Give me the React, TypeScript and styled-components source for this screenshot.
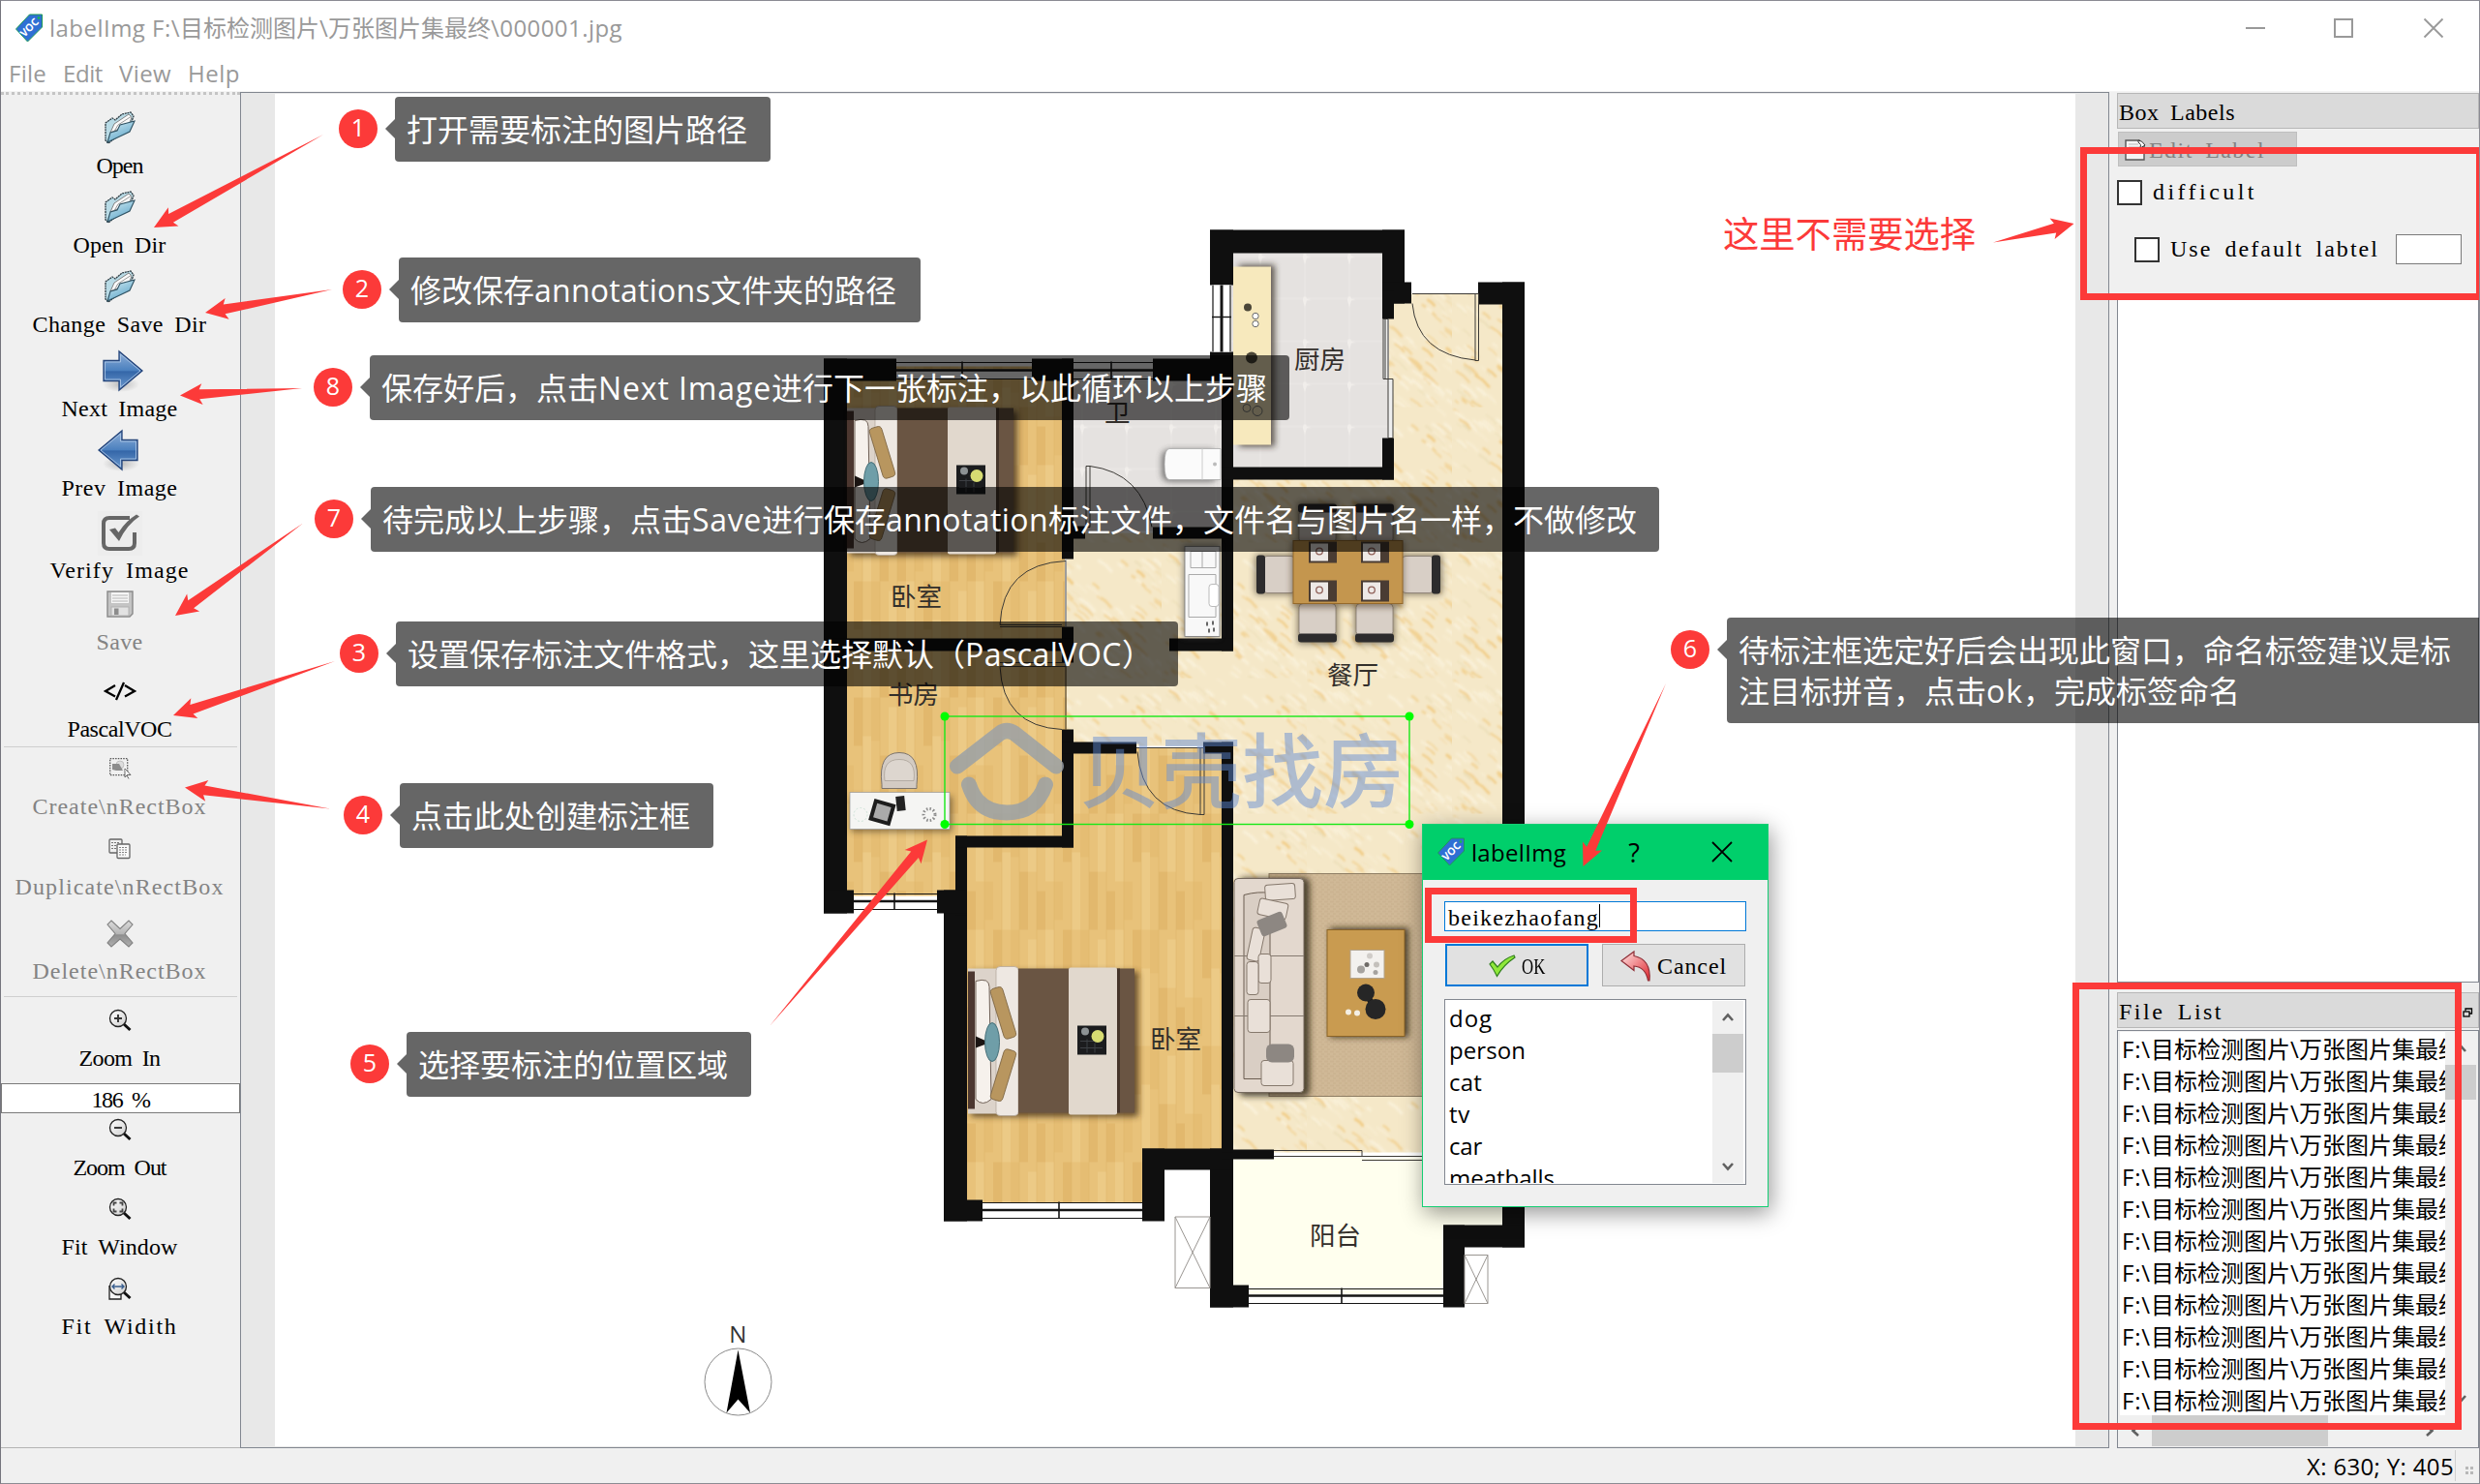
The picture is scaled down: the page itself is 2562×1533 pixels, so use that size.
import React, { useLayoutEffect, useRef, useState } from 'react';
import styled, { createGlobalStyle, css } from 'styled-components';

const RED = '#fc3a39';
const SANS = '"Open Sans", "Noto Sans CJK SC", sans-serif';
const SERIF = '"Liberation Serif", "Noto Sans CJK SC", serif';

const GlobalStyle = createGlobalStyle`
  * { box-sizing: border-box; }
  body { margin: 0; background: #f0f0f0; font-family: ${SANS}; overflow: hidden; }
  svg { display: block; flex: none; overflow: visible; }
`;

/* ---------- text that is tracked to an exact run length ---------- */

const Run = styled.span<{ $serif?: boolean }>`
  display: inline-block;
  white-space: pre;
  ${p => p.$serif && css`font-family: ${SERIF}; font-size: 24px; word-spacing: 5px;`}
`;

function Fit({ w, serif, children }: { w: number; serif?: boolean; children: string }) {
  const ref = useRef<HTMLSpanElement>(null);
  const [spacing, setSpacing] = useState(0);
  useLayoutEffect(() => {
    const el = ref.current;
    if (el) setSpacing((w - el.getBoundingClientRect().width) / children.length);
  }, []);
  return <Run ref={ref} $serif={serif} style={{ letterSpacing: spacing }}>{children}</Run>;
}

const Mono = ({ children }: { children: string }) => <Fit serif w={children.length * 12}>{children}</Fit>;

/* ---------- window frame ---------- */

const Window = styled.div`
  position: relative;
  width: 2562px;
  height: 1533px;
  display: flex;
  flex-direction: column;
  background: #f0f0f0;
  border: 1px solid #8b8b93;
  border-left-color: #75757d;
  overflow: hidden;
`;

const TitleBar = styled.header`
  height: 55px;
  flex: none;
  display: flex;
  align-items: center;
  background: #fff;
  color: #999;
  font-size: 24px;
  padding-left: 14px;
  gap: 6px;
`;

const TitleText = styled.div`
  flex: 1;
  white-space: pre;
  line-height: 34px;
  padding-top: 1px;
`;

const WindowButtons = styled.div`
  display: flex;
  gap: 71px;
  padding-right: 36px;
`;

const MenuBar = styled.nav`
  height: 39px;
  flex: none;
  display: flex;
  gap: 17px;
  padding: 0 0 0 8px;
  background: #fff;
  color: #999;
  font-size: 24px;
  line-height: 39px;
  border-bottom: 1px solid #f4f4f4;
`;

const Body = styled.div`
  flex: 1;
  min-height: 0;
  display: flex;
`;

const StatusBar = styled.footer`
  height: 36px;
  flex: none;
  display: flex;
  justify-content: flex-end;
  align-items: center;
  font-size: 24px;
  line-height: 34px;
  color: #000;
`;

const StatusCell = styled.div`
  height: 32px;
  line-height: 34px;
  padding-right: 1px;
  border-right: 1px solid #d0d0d0;
`;

const Grip = styled.div`
  display: grid;
  grid-template-columns: 3px 3px;
  gap: 2px;
  margin: 10px 6px 0 10px;
  i { width: 3px; height: 3px; background: #b8b8b8; }
`;

/* ---------- tool bar ---------- */

const ToolColumn = styled.aside`
  width: 247px;
  flex: none;
  display: flex;
  flex-direction: column;
  background: #f0f0f0;
  border-top: 3px dotted #c4c4c4;
  border-bottom: 1px solid #b4b4b4;
  padding-top: 5px;
`;

const ToolItem = styled.div<{ $gap: number; $off?: boolean }>`
  margin-top: ${p => p.$gap}px;
  display: flex;
  flex-direction: column;
  align-items: center;
  gap: 9px;
  padding-right: 2px;
  color: ${p => (p.$off ? '#838383' : '#000')};
`;

const IconSlot = styled.div`
  height: 32px;
  display: flex;
  align-items: center;
  justify-content: center;
`;

const ToolLabel = styled.div`
  height: 28px;
  line-height: 28px;
  white-space: pre;
`;

const Rule = styled.div<{ $gap: number }>`
  height: 1px;
  margin: ${p => p.$gap}px 3px 0;
  background: #cfcfcf;
`;

const ZoomField = styled.div`
  height: 31px;
  margin-top: 12px;
  border: 1px solid #7a7a7a;
  background: #fff;
  text-align: center;
  line-height: 32px;
`;

/* ---------- canvas ---------- */

const CanvasFrame = styled.main`
  flex: 1;
  display: flex;
  justify-content: center;
  border: 1px solid #828790;
  background: #e8e8e8;
  padding: 1px 0;
`;

const Sheet = styled.div`
  width: 1860px;
  background: #fff;
`;

/* ---------- right docks ---------- */

const Docks = styled.aside`
  width: 382px;
  flex: none;
  display: flex;
  flex-direction: column;
  padding-left: 8px;
  background: #f0f0f0;
`;

const DockTitle = styled.div<{ $gap?: number }>`
  height: 37px;
  flex: none;
  margin-top: ${p => p.$gap ?? 1}px;
  display: flex;
  align-items: center;
  justify-content: space-between;
  padding: 4px 6px 0 1px;
  background: #dadada;
  border: 1px solid #b7b7b7;
`;

const EditButton = styled.div`
  width: 185px;
  height: 36px;
  margin: 3px 0 0 1px;
  display: flex;
  align-items: center;
  gap: 3px;
  padding: 2px 0 0 6px;
  background: #ccc;
  border: 1px solid #bfbfbf;
  color: #838383;
`;

const CheckRow = styled.div<{ $top: number; $left?: number }>`
  height: 31px;
  margin-top: ${p => p.$top}px;
  padding-left: ${p => p.$left ?? 0}px;
  display: flex;
  align-items: center;
  gap: 11px;
`;

const Box = styled.span`
  width: 26px;
  height: 26px;
  border: 2px solid #333;
  background: #fff;
`;

const SmallField = styled.span`
  width: 68px;
  height: 31px;
  margin-left: 6px;
  border: 1px solid #7a7a7a;
  background: #fff;
`;

const LabelList = styled.div`
  height: 711px;
  margin-top: 31px;
  flex: none;
  background: #fff;
  border: 1px solid #828790;
`;

const FileBox = styled.div`
  flex: 1;
  min-height: 0;
  margin-top: 2px;
  display: grid;
  grid-template-columns: 1fr 32px;
  grid-template-rows: 1fr 32px;
  padding: 1px 2px;
  background: #f0f0f0;
  border: 1px solid #828790;
`;

const FileRows = styled.div`
  overflow: hidden;
  background: #fff;
  padding: 0 0 0 2px;
`;

const FileRow = styled.div`
  height: 33px;
  line-height: 35px;
  font-size: 24px;
  white-space: nowrap;
`;

const VScroll = styled.div`
  display: flex;
  flex-direction: column;
  align-items: center;
  justify-content: space-between;
  background: #f0f0f0;
`;

const VThumb = styled.div<{ $h: number }>`
  width: 32px;
  height: ${p => p.$h}px;
  background: #cdcdcd;
`;

const ArrowCell = styled.div`
  width: 32px;
  height: 34px;
  display: flex;
  align-items: center;
  justify-content: center;
`;

const Spacer = styled.div`
  flex: 1;
`;

const HScroll = styled.div`
  display: flex;
  align-items: center;
  background: #f0f0f0;
`;

const HThumb = styled.div`
  width: 182px;
  height: 32px;
  margin-left: 1px;
  background: #cdcdcd;
`;

/* ---------- annotations laid over the window ---------- */

const Note = styled.div<{ $x: number; $y: number; $w: number }>`
  position: absolute;
  left: ${p => p.$x - 1}px;
  top: ${p => p.$y - 1}px;
  width: ${p => p.$w}px;
  padding: 13px 0 12px 12px;
  background: rgba(0, 0, 0, 0.6);
  border-radius: 4px;
  color: #fff;
  font-size: 32px;
  line-height: 42px;
  white-space: nowrap;
  &::before {
    content: '';
    position: absolute;
    left: -10px;
    top: 23px;
    border: 10px solid transparent;
    border-left: 0;
    border-right-color: rgba(0, 0, 0, 0.6);
  }
`;

const Badge = styled.div<{ $x: number; $y: number }>`
  position: absolute;
  left: ${p => p.$x - 21}px;
  top: ${p => p.$y - 21}px;
  width: 40px;
  height: 40px;
  border-radius: 50%;
  background: ${RED};
  color: #fff;
  font-size: 25px;
  line-height: 37px;
  text-align: center;
`;

const RedText = styled.div`
  position: absolute;
  left: 1779px;
  top: 216px;
  color: ${RED};
  font-size: 37.300px;
  line-height: 50px;
  white-space: nowrap;
`;

const RedFrame = styled.div<{ $x: number; $y: number; $w: number; $h: number }>`
  position: absolute;
  left: ${p => p.$x - 1}px;
  top: ${p => p.$y - 1}px;
  width: ${p => p.$w}px;
  height: ${p => p.$h}px;
  border: 7px solid ${RED};
`;

const ArrowLayer = styled.svg`
  position: absolute;
  left: -1px;
  top: -1px;
`;

/* ---------- label dialog ---------- */

const Dialog = styled.section`
  position: absolute;
  left: 1468px;
  top: 850px;
  width: 358px;
  height: 396px;
  display: flex;
  flex-direction: column;
  background: #f0f0f0;
  border: 1px solid #14cf74;
  box-shadow: 2px 6px 22px rgba(0, 0, 0, 0.42);
`;

const DialogTitle = styled.div`
  height: 57px;
  flex: none;
  display: flex;
  align-items: center;
  padding: 0 36px 1px 14px;
  gap: 6px;
  background: #00cf6b;
  font-size: 24px;
  color: #000;
`;

const HelpMark = styled.span`
  margin: 0 68px 0 auto;
  font-size: 27px;
`;

const DialogBody = styled.div`
  flex: 1;
  display: flex;
  flex-direction: column;
  padding: 22px 22px;
`;

const NameField = styled.div`
  height: 31px;
  display: flex;
  align-items: center;
  padding: 4px 0 0 3px;
  background: #fff;
  border: 1px solid #0078d7;
`;

const Caret = styled.i`
  width: 1px;
  height: 24px;
  margin-top: -5px;
  background: #000;
`;

const ButtonRow = styled.div`
  display: flex;
  gap: 14px;
  padding: 0 1px;
  margin: 13px 0;
`;

const DialogButton = styled.div<{ $primary?: boolean }>`
  width: 148px;
  height: 44px;
  display: flex;
  align-items: center;
  justify-content: center;
  gap: 6px;
  padding-top: 2px;
  background: #e1e1e1;
  border: ${p => (p.$primary ? '2px solid #0078d7' : '1px solid #adadad')};
`;

const NarrowLabel = styled.span`
  font-family: ${SERIF};
  font-size: 24px;
  width: 24px;
  transform: scaleX(0.7);
  transform-origin: left;
`;

const NameList = styled.div`
  height: 192px;
  display: flex;
  padding: 1px 2px 1px 1px;
  background: #fff;
  border: 1px solid #828790;
`;

const Names = styled.div`
  flex: 1;
  overflow: hidden;
  padding-left: 3px;
  font-size: 24px;
`;

const NameRow = styled.div`
  height: 33px;
  line-height: 35px;
`;

/* ---------- small drawings ---------- */

const TagIcon = () => (
  <svg width="30" height="30" viewBox="0 0 29 30">
    <path d="M15 1H28V14L13 29 1 16Z" fill="#2f6fd4" stroke="#1d9a55" strokeWidth="1" />
    <circle cx="24.5" cy="4.5" r="1.4" fill="#19b35a" />
    <text x="15" y="18" fontSize="10.5" fontWeight="700" fill="#fff" textAnchor="middle" transform="rotate(-45 15 14.5)" fontFamily={SANS}>VOC</text>
  </svg>
);

const FolderIcon = () => (
  <svg width="34" height="34" viewBox="0 0 34 34">
    <defs>
      <linearGradient id="folder" x1="0" y1="0" x2="0.6" y2="1">
        <stop offset="0" stopColor="#d8eff6" /><stop offset="1" stopColor="#5fa6c9" />
      </linearGradient>
    </defs>
    <path d="M2 12L9 7 12 9 19 3 28 1 31 5 27 16 5 33 2 30Z" fill="#b9dbe6" stroke="#2d3b42" strokeWidth="1.3" strokeDasharray="2 .7" />
    <path d="M7 22L11 13 26 3 29 6 26 14Z" fill="#fafafa" stroke="#777" strokeWidth=".9" />
    <path d="M9 24L15 14 29 5" stroke="#999" fill="none" />
    <path d="M4 32L7 22 14 20 17 14 32 10 27 21Z" fill="url(#folder)" stroke="#2f5263" strokeWidth="1.1" />
  </svg>
);

const BigArrow = ({ back }: { back?: boolean }) => (
  <svg width="44" height="44" viewBox="0 0 44 44">
    <defs>
      <linearGradient id="blue" x1="0" y1="0" x2="0" y2="1">
        <stop offset="0" stopColor="#8fb0d8" /><stop offset=".5" stopColor="#4a7fbe" /><stop offset=".52" stopColor="#3466a8" /><stop offset="1" stopColor="#6d9bd0" />
      </linearGradient>
      <radialGradient id="shade"><stop offset="0" stopColor="#999" stopOpacity=".6" /><stop offset="1" stopColor="#999" stopOpacity="0" /></radialGradient>
    </defs>
    <ellipse cx="23" cy="36" rx="19" ry="8" fill="url(#shade)" />
    <g transform={back ? 'translate(42 0) scale(-1 1)' : 'translate(3 0)'}>
      <path d="M2 11.5H18V2L42 22 18 42V32.500H2Z" fill="url(#blue)" stroke="#24447a" strokeWidth="1.3" />
      <path d="M3.500 13H19.500V5L40 22 19.500 39V31H3.500Z" fill="none" stroke="#a9c4e4" strokeWidth=".9" />
    </g>
  </svg>
);

const VerifyIcon = () => (
  <svg width="46" height="44" viewBox="0 0 46 44">
    <rect width="46" height="46" fill="#ededed" />
    <path d="M33 7H12Q6 7 6 13V33Q6 39 12 39H32Q38 39 38 33V22" fill="none" stroke="#666" strokeWidth="4" />
    <path d="M12 19L22 31Q30 14 43 5.500L40 3.500Q29 10 21.500 22L18 17.500Z" fill="#666" />
  </svg>
);

const SaveIcon = () => (
  <svg width="28" height="28" viewBox="0 0 28 28">
    <path d="M1 1H27V24L24 27H1Z" fill="#c4c4c4" stroke="#8a8a8a" strokeWidth="1.4" />
    <rect x="5" y="2" width="18" height="11" fill="#f6f6f6" />
    <path d="M6 5H22M6 8H22M6 11H22" stroke="#b5b5b5" />
    <rect x="5" y="17" width="18" height="9" fill="#e2e2e2" stroke="#aaa" strokeWidth=".8" />
    <rect x="8" y="18.500" width="4.500" height="6.500" fill="#8c8c8c" />
  </svg>
);

const CodeIcon = () => (
  <svg width="34" height="20" viewBox="0 0 34 20" fill="none" stroke="#000" strokeWidth="2.300">
    <path d="M12 4L2 10 12 15.500M22 4L32 10 22 15.500M21 1L13 19" />
  </svg>
);

const CreateIcon = () => (
  <svg width="22" height="22" viewBox="0 0 22 22">
    <rect x=".7" y=".7" width="18" height="17" fill="none" stroke="#555" strokeWidth="1.3" strokeDasharray="1.500 1.200" />
    <circle cx="11" cy="7" r="4" fill="#ddd" stroke="#aaa" strokeWidth=".6" />
    <path d="M3 6H10L14 13H7L3 12Z" fill="#8c8c8c" />
    <path d="M16 11V20L18 18 20 21.500" fill="#fff" stroke="#666" /><path d="M16 11L22 17.500H18" fill="#fff" stroke="#666" />
  </svg>
);

const DuplicateIcon = () => (
  <svg width="23" height="22" viewBox="0 0 23 22" stroke="#666" strokeWidth="1.300">
    <rect x="1" y="1" width="13" height="14" rx="1" fill="#efefef" />
    <path d="M3 4.500H12M3 7.500H8M3 10.500H8" strokeDasharray="2 1" strokeWidth=".9" />
    <rect x="9" y="6" width="13" height="14.500" rx="1" fill="#fafafa" />
    <path d="M11 9.500H20M11 12H20M11 14.500H20M11 17H18" strokeDasharray="2 1" strokeWidth=".8" />
  </svg>
);

const DeleteIcon = () => (
  <svg width="28" height="29" viewBox="0 0 28 29">
    <defs><linearGradient id="del" x1="0" y1="0" x2="0" y2="1"><stop offset="0" stopColor="#ddd" /><stop offset=".5" stopColor="#b5b5b5" /><stop offset=".55" stopColor="#8e8e8e" /><stop offset="1" stopColor="#b0b0b0" /></linearGradient></defs>
    <path d="M5 1L14 9.500 23 1 27 5 19 14.500 27 24 23 28 14 20 5 28 1 24 9 14.500 1 5Z" fill="url(#del)" stroke="#828282" strokeWidth="1.100" />
  </svg>
);

const Lens = ({ kind }: { kind: 'in' | 'out' | 'window' | 'width' }) => (
  <svg width="24" height="24" viewBox="0 0 24 24" fill="none">
    <defs><linearGradient id="lens" x1="0" y1="0" x2="1" y2="1"><stop offset="0" stopColor="#fff" /><stop offset="1" stopColor="#cfcfcf" /></linearGradient></defs>
    {kind === 'width' && <path d="M1 9V23H13V16" stroke="#222" strokeWidth="1.300" fill="#f6f6f6" />}
    <path d="M16 16L22.500 22" stroke="#111" strokeWidth="3" />
    <circle cx="10" cy="10" r="8.500" fill="url(#lens)" stroke="#222" strokeWidth="1.300" />
    {kind === 'in' && <path d="M6 10H14M10 6V14" stroke="#333" strokeWidth="1.900" />}
    {kind === 'out' && <path d="M6 10H14" stroke="#333" strokeWidth="1.900" />}
    {kind === 'window' && <path d="M5.500 8.500V5.500H8.500M11.500 5.500H14.500V8.500M14.500 11.500V14.500H11.500M8.500 14.500H5.500V11.500" stroke="#444" strokeWidth="1.800" />}
    {kind === 'width' && <path d="M4 10H16M6.500 7.500L4 10 6.500 12.500M13.500 7.500L16 10 13.500 12.500" stroke="#3a5f8f" strokeWidth="1.400" />}
  </svg>
);

const PageIcon = () => (
  <svg width="22" height="22" viewBox="0 0 22 22">
    <path d="M1 1H15L20 6V21H1Z" fill="#f4f4f4" stroke="#555" strokeWidth="1.400" />
    <path d="M4 5H14M4 8H16M4 11H13" stroke="#bbb" />
    <path d="M14 1Q18 1 21 6L16 9Q18 5 14 3Z" fill="#fff" stroke="#333" />
  </svg>
);

const CheckIcon = () => (
  <svg width="28" height="24" viewBox="0 0 28 24">
    <path d="M1 10L4 7 9 13Q16 4 26 1L27 3Q15 11 8.500 22.500Q5 15 1 10Z" fill="#8fe83a" stroke="#2f7d1c" strokeWidth="1.200" />
  </svg>
);

const UndoIcon = () => (
  <svg width="32" height="34" viewBox="0 0 32 34">
    <defs><linearGradient id="undo" x1="0" y1="0" x2="1" y2="1"><stop offset="0" stopColor="#ffe6e6" /><stop offset="1" stopColor="#e0262d" /></linearGradient></defs>
    <path d="M1 11.500L14 2V6.500Q32 10 30 32H28.500Q26 18 14 17V21.500Z" fill="url(#undo)" stroke="#8f3038" strokeWidth="1.200" />
  </svg>
);

const Chevron = ({ turn }: { turn: number }) => (
  <svg width="12" height="10" viewBox="-6 -5 12 10">
    <path d="M-5 3L0 -2.500 5 3" fill="none" stroke="#606060" strokeWidth="2.600" transform={`rotate(${turn})`} />
  </svg>
);

/* ---------- floor plan ---------- */

const Bed = ({ dx, dy }: { dx: number; dy: number }) => (
  <g transform={`translate(${dx} ${dy})`}>
    <rect x="878" y="424" width="173" height="150" rx="3" fill="#3d2c18" opacity=".75" filter="url(#soft)" />
    <rect x="875" y="421" width="52" height="150" fill="#dcd3ca" />
    <rect x="875" y="424" width="7" height="142" fill="#4c3730" />
    <path d="M883 434Q897 430 897 440L899 556Q890 564 883 556Z" fill="#f6f1ec" stroke="#6f6056" />
    <rect x="904" y="419" width="23" height="154" rx="4" fill="#eee8e2" stroke="#b0a498" strokeWidth=".7" />
    <rect x="905" y="440" width="13" height="54" rx="4" fill="#b8965f" stroke="#7c6442" strokeWidth=".8" transform="rotate(-17 911 467)" />
    <rect x="905" y="504" width="13" height="54" rx="4" fill="#b8965f" stroke="#7c6442" strokeWidth=".8" transform="rotate(17 911 531)" />
    <path d="M883 491L894 496V499L883 503Z" fill="#1a1412" />
    <ellipse cx="900" cy="497" rx="7.500" ry="20" fill="#6f9ea8" stroke="#466f78" />
    <rect x="927" y="421" width="120" height="149" fill="#6a5543" />
    <rect x="979" y="420" width="50" height="152" rx="2" fill="#e1d8cd" />
    <rect x="1029" y="421" width="3" height="149" fill="#45352a" />
    <rect x="988" y="480" width="30" height="30" fill="#1b1c1e" />
    <path d="M991 496H1014M991 503H1014M998 494V508M1006 498V508" stroke="#3d4044" />
    <circle cx="996" cy="486" r="4" fill="#8d9294" />
    <circle cx="1009" cy="491" r="6.500" fill="#d7dc72" />
  </g>
);

const Chair = ({ x, y, turn }: { x: number; y: number; turn: number }) => (
  <g transform={`translate(${x} ${y}) rotate(${turn})`}>
    <rect x="-21" y="-19" width="42" height="41" rx="4" fill="#2a2017" opacity=".5" filter="url(#soft)" />
    <rect x="-19" y="-20" width="38" height="33" rx="4" fill="#d8cfc6" stroke="#85796f" strokeWidth=".8" />
    <rect x="-20" y="11" width="40" height="9" rx="3" fill="#2d2c2d" />
  </g>
);

const Mat = ({ x, y }: { x: number; y: number }) => (
  <g transform={`translate(${x} ${y})`}>
    <rect width="29" height="22" fill="#4a3c33" />
    <rect x="2" y="2" width="18" height="18" fill="#eee9e6" />
    <circle cx="11" cy="10" r="3.300" fill="none" stroke="#8f6058" strokeWidth="1.300" />
  </g>
);

const PlanWindow = ({ x, y, w, h, split }: { x: number; y: number; w: number; h: number; split: number }) =>
  w > h ? (
    <g stroke="#151515">
      <rect x={x} y={y + h * 0.45} width={w} height={h * 0.55} fill="#fff" stroke="none" />
      <path d={`M${x} ${y + 1}H${x + w}M${x} ${y + h}H${x + w}`} strokeWidth="1.200" />
      <path d={`M${x} ${y + h * 0.5}H${x + w}`} strokeWidth="2.600" />
      <path d={`M${split} ${y}V${y + h}`} strokeWidth="1.600" />
    </g>
  ) : (
    <g stroke="#151515">
      <rect x={x} y={y} width={w} height={h} fill="#fff" stroke="none" />
      <path d={`M${x + 1} ${y}V${y + h}M${x + w - 1} ${y}V${y + h}`} strokeWidth="1.200" />
      <path d={`M${x + w * 0.5} ${y}V${y + h}`} strokeWidth="3" />
      <path d={`M${x} ${split}H${x + w}`} strokeWidth="1.400" />
    </g>
  );

/* Veins of the marble tile: short diagonal strokes from a fixed pseudo-random sequence. */
const VEINS = (() => {
  let seed = 17;
  const next = () => (seed = (seed * 16807) % 2147483647) / 2147483647;
  const colors = ['#efc16c', '#f0cb85', '#fbf4e0', '#e9dcb4', '#fbf4e0'];
  return Array.from({ length: 150 }, () => {
    const x = next() * 150;
    const y = next() * 140;
    const len = 4 + next() * 13;
    const color = colors[Math.floor(next() * colors.length)];
    return { d: `M${x} ${y}l${len * 0.55} ${len * 0.35}l${len * 0.45} ${len * 0.5}`, color, width: 0.8 + next() * 2.2 };
  });
})();

const WALLS: [number, number, number, number][] = [
  [1250, 237, 1451, 261], [1250, 237, 1274, 294], [1250, 363, 1274, 393], [1191, 370, 1274, 393],
  [1262, 385, 1274, 672], [1428, 237, 1451, 313], [1428, 291, 1458, 313], [1428, 300, 1440, 329],
  [1428, 452, 1440, 495], [1262, 482, 1440, 495], [1527, 291, 1575, 314], [1552, 291, 1575, 1288],
  [1491, 1265, 1575, 1288], [1491, 1265, 1513, 1350], [1250, 1327, 1290, 1350], [1250, 1186, 1274, 1350],
  [1180, 1186, 1274, 1208], [1262, 1187, 1316, 1197], [1180, 1186, 1203, 1261], [975, 1239, 1015, 1261],
  [975, 919, 999, 1261], [987, 863, 999, 945], [968, 919, 999, 943], [987, 863, 1109, 875],
  [1097, 753, 1109, 875], [1097, 766, 1174, 778], [1243, 766, 1274, 778], [1262, 766, 1274, 1190],
  [851, 370, 875, 943], [851, 919, 882, 943], [851, 370, 926, 393], [1066, 370, 1109, 393],
  [1097, 370, 1109, 577], [1097, 543, 1121, 556], [1191, 544, 1274, 556], [1097, 647, 1109, 684],
  [851, 659, 1109, 672], [1208, 659, 1274, 672],
];

const ROOMS: [string, number, number][] = [
  ['厨房', 1337, 380], ['卧室', 920, 625], ['餐厅', 1371, 706], ['书房', 917, 726], ['卧室', 1188, 1082], ['阳台', 1353, 1285], ['卫', 1141, 435],
];

const FloorPlan = () => (
  <svg width="1860" height="1396" viewBox="284 96.5 1860 1396" fontFamily={SANS}>
    <defs>
      <filter id="soft" x="-20%" y="-20%" width="140%" height="140%"><feGaussianBlur stdDeviation="3" /></filter>
      <filter id="haze"><feGaussianBlur stdDeviation=".8" /></filter>
      <pattern id="wood" width="72" height="120" patternUnits="userSpaceOnUse">
        <rect width="72" height="120" fill="#e8c27a" />
        <path d="M0 0H9V70H0ZM27 40H36V120H27ZM54 10H63V60H54Z" fill="#ecca86" />
        <path d="M18 0H27V50H18ZM45 60H54V120H45ZM63 80H72V120H63Z" fill="#e2b86d" />
        <path d="M36 0H45V45H36ZM9 70H18V110H9Z" fill="#e5bd73" />
        <path d="M9 0V120M27 0V120M45 0V120M63 0V120" stroke="#ddb368" strokeWidth=".5" />
      </pattern>
      <pattern id="marble" width="150" height="140" patternUnits="userSpaceOnUse">
        <rect width="150" height="140" fill="#f5e8c8" />
        <g filter="url(#haze)" fill="none" opacity=".75">
          {VEINS.map((v, i) => <path key={i} d={v.d} stroke={v.color} strokeWidth={v.width} />)}
        </g>
      </pattern>
      <pattern id="tile" x="1300" y="262" width="46" height="44" patternUnits="userSpaceOnUse">
        <rect width="46" height="44" fill="#e5e2e0" />
        <path d="M0 2H46M2 0V44" stroke="#eae7e5" strokeWidth="1.500" />
        <path d="M2 -4L4 2 9 3 4 4 2 11 0 4 0 2Z" fill="#f1eeeb" />
      </pattern>
      <pattern id="weave" width="6" height="5" patternUnits="userSpaceOnUse">
        <rect width="6" height="5" fill="#d0b997" /><path d="M0 1H4M3 3.500H6" stroke="#c6ae8b" />
      </pattern>
    </defs>

    <g fill="url(#wood)">
      <rect x="870" y="378" width="230" height="285" />
      <path d="M870 668H1102V868H990V925H870Z" />
      <path d="M995 872H1105V772H1265V1190H1182V1242H995Z" />
    </g>
    <g fill="url(#marble)">
      <path d="M1102 550H1265V770H1102Z" />
      <path d="M1270 490H1435V303H1555V1190H1270Z" />
      <rect x="1260" y="660" width="20" height="110" />
    </g>
    <g fill="url(#tile)">
      <rect x="1105" y="380" width="160" height="168" />
      <rect x="1270" y="255" width="165" height="230" />
    </g>
    <path d="M1270 1195H1555V1268H1492V1340H1270Z" fill="#ffffee" />
    <rect x="1311" y="902" width="200" height="230" fill="url(#weave)" stroke="#8f7e64" />

    <g fill="#0f0f0f">
      {WALLS.map(([a, b, c, d], i) => <rect key={i} x={a} y={b} width={c - a} height={d - b} />)}
    </g>

    <PlanWindow x={926} y={373} w={140} h={18} split={994} />
    <PlanWindow x={1109} y={373} w={82} h={18} split={1148} />
    <PlanWindow x={1252} y={294} w={20} h={69} split={327} />
    <PlanWindow x={882} y={922} w={86} h={17} split={924} />
    <PlanWindow x={1015} y={1241} w={165} h={17} split={1094} />
    <PlanWindow x={1290} y={1330} w={201} h={16} split={1386} />

    <g fill="none" stroke="#3c3a36" strokeWidth="1">
      <path d="M1459 303H1527M1524 303H1527.500V372H1524ZM1459 313Q1464 366 1524 371.500" />
      <path d="M1429 329H1434V391H1429ZM1434 391H1439V452H1434ZM1431 329V391" fill="#eee" />
      <path d="M1101 578V647M1101 579Q1036 582 1033 645H1097M1033 647H1097" />
      <path d="M1101 684V753M1033 684H1101M1033 688H1101M1033 688Q1036 750 1097 753" />
      <path d="M1122 481H1126V544H1122ZM1126 481Q1180 488 1190 544" />
      <path d="M1174 772H1243M1240 772H1244V841H1240ZM1175 776Q1180 838 1240 841" />
      <path d="M1316 1188H1407V1194H1552M1316 1194H1407M1407 1198H1552" />
    </g>
    <g fill="none" stroke="#9a9692">
      <path d="M1214 1256.500H1250V1330H1214ZL1250 1330M1250 1256.500L1214 1330" />
      <path d="M1513 1296H1537V1346H1513ZL1537 1346M1537 1296L1513 1346" />
    </g>

    <Bed dx={0} dy={0} />
    <Bed dx={125} dy={579} />

    {/* kitchen counter */}
    <rect x="1280" y="273" width="37" height="188" fill="#2c2418" opacity=".7" filter="url(#soft)" />
    <rect x="1274" y="275" width="39" height="184" fill="#f7e9bd" />
    <circle cx="1289" cy="317" r="4" fill="#4b4638" /><circle cx="1297" cy="326" r="3.200" fill="#fff" stroke="#666" /><circle cx="1297" cy="334" r="3.200" fill="#fff" stroke="#666" />
    <circle cx="1293" cy="369" r="6" fill="#4b4638" /><circle cx="1288" cy="421" r="4" fill="none" stroke="#777" /><circle cx="1299" cy="424" r="5" fill="none" stroke="#777" />

    {/* bathroom */}
    <rect x="1200" y="464" width="58" height="33" rx="8" fill="#333" opacity=".6" filter="url(#soft)" />
    <path d="M1261 463H1208Q1203 463 1203 479T1208 495H1261Z" fill="#fbfbfb" stroke="#aaa" strokeWidth=".8" />
    <path d="M1242 463V495" stroke="#ccc" /><circle cx="1255" cy="479" r="2" fill="#bbb" />
    <rect x="1222" y="562" width="38" height="96" fill="#444" opacity=".5" filter="url(#soft)" />
    <rect x="1224" y="564" width="36" height="93" fill="#f8f8f8" stroke="#777" strokeWidth=".8" />
    <path d="M1230 569H1256V586H1230ZM1242 569V586M1228 593H1256V637H1228Z" fill="none" stroke="#aaa" />
    <rect x="1249" y="603" width="10" height="23" rx="3" fill="#fff" stroke="#bbb" />
    <path d="M1247 642V646M1253 641V645M1249 649V653M1254 648V652" fill="none" stroke="#666" strokeWidth="2" />

    {/* dining set */}
    <Chair x={1361} y={540} turn={180} /><Chair x={1420} y={540} turn={180} />
    <Chair x={1361} y={643} turn={0} /><Chair x={1420} y={643} turn={0} />
    <Chair x={1318} y={593} turn={90} /><Chair x={1468} y={593} turn={-90} />
    <rect x="1334" y="558" width="116" height="69" fill="#3a2a12" opacity=".5" filter="url(#soft)" />
    <rect x="1336" y="558" width="113" height="65" fill="#c4964e" stroke="#94692b" />
    <Mat x={1352} y={559} /><Mat x={1406} y={559} /><Mat x={1352} y={599} /><Mat x={1406} y={599} />

    {/* study */}
    <path d="M911 810Q907 777 929 777T947 810V814H911Z" fill="#d3cbc3" stroke="#7d746b" />
    <path d="M914 806Q911 784 929 784T944 806Z" fill="#ddd6cf" stroke="#a59c92" strokeWidth=".7" />
    <rect x="879" y="822" width="105" height="37" fill="#3a2a12" opacity=".5" filter="url(#soft)" />
    <rect x="878" y="818" width="103" height="38" fill="#f5f5f3" stroke="#999" strokeWidth=".7" />
    <rect x="902" y="829" width="19" height="19" fill="#aaa" stroke="#1d1d1d" strokeWidth="4" transform="rotate(16 911 838)" />
    <rect x="926" y="822" width="9" height="15" fill="#222" transform="rotate(-6 930 830)" />
    <circle cx="960" cy="841" r="6" fill="none" stroke="#8a8a8a" strokeWidth="3" strokeDasharray="1.500 2" />
    <circle cx="889" cy="841" r="7" fill="none" stroke="#cfe3d8" strokeDasharray="2 2" />

    {/* living room */}
    <rect x="1280" y="906" width="73" height="226" rx="6" fill="#241a10" opacity=".75" filter="url(#soft)" />
    <rect x="1275" y="907" width="72" height="221" rx="4" fill="#e3d8ce" stroke="#75695e" />
    <path d="M1285 924Q1300 920 1312 922V1114H1285Z" fill="#d9cec4" stroke="#6b5d50" />
    <path d="M1275 987H1347M1275 1049H1347" stroke="#857a70" />
    <g fill="#e9e0d8" stroke="#85786c">
      <rect x="1307" y="913" width="31" height="16" rx="3" transform="rotate(-4 1322 921)" />
      <rect x="1300" y="930" width="30" height="17" rx="3" transform="rotate(12 1315 938)" />
      <rect x="1291" y="958" width="13" height="34" rx="3" transform="rotate(12 1297 975)" />
      <rect x="1300" y="985" width="13" height="30" rx="3" /><rect x="1288" y="993" width="12" height="34" rx="3" />
      <rect x="1289" y="1032" width="23" height="34" rx="3" /><rect x="1303" y="1095" width="33" height="26" rx="3" />
    </g>
    <rect x="1300" y="945" width="28" height="18" rx="3" fill="#8d8782" transform="rotate(-22 1314 954)" />
    <rect x="1308" y="1078" width="29" height="19" rx="6" fill="#8d8782" />
    <rect x="1374" y="958" width="81" height="113" fill="#2c200f" opacity=".8" filter="url(#soft)" />
    <rect x="1371" y="960" width="80" height="110" fill="#c99b50" stroke="#8a6427" />
    <rect x="1395" y="981" width="35" height="29" fill="#f3f1ee" stroke="#b3a48d" />
    <g fill="#a5a29e">
      <circle cx="1406" cy="1001" r="4" /><circle cx="1415" cy="987" r="3" fill="#d0ccc8" /><circle cx="1422" cy="996" r="3" fill="#c4c0bb" />
      <circle cx="1412" cy="996" r="2.500" fill="#6f6b67" /><circle cx="1421" cy="1004" r="2.500" />
    </g>
    <path d="M1411 1026L1421 1042" stroke="#1c1c1c" strokeWidth="6" />
    <circle cx="1411" cy="1025" r="9" fill="#262626" /><circle cx="1421" cy="1042" r="10.500" fill="#262626" />
    <circle cx="1393" cy="1045" r="3" fill="#f4efe4" /><circle cx="1402" cy="1046" r="3" fill="#f4efe4" />

    {ROOMS.map(([t, x, y]) => <text key={`${x}-${y}`} x={x} y={y} fontSize="26.500" fill="#332f2b">{t}</text>)}

    {/* watermark */}
    <g fill="none" stroke="#98a0a8" strokeWidth="16" strokeLinecap="round" strokeLinejoin="round" opacity=".82">
      <path d="M989 791L1033 757Q1040 752 1048 757L1091 791" />
      <path d="M1001 810Q1010 839 1040 839T1080 810" />
    </g>
    <text x="1115" y="827" fontSize="84" fontWeight="500" fill="#5f8ad6" opacity=".47">贝壳找房</text>

    <g stroke="#17e817" fill="none"><rect x="976" y="739.500" width="480" height="111.500" strokeWidth="1.400" /></g>
    <g fill="#0f0"><circle cx="976" cy="739.500" r="4.500" /><circle cx="1456" cy="739.500" r="4.500" /><circle cx="976" cy="851" r="4.500" /><circle cx="1456" cy="851" r="4.500" /></g>

    <circle cx="762.500" cy="1427" r="34.500" fill="none" stroke="#8a8a8a" />
    <path d="M762.500 1394L775 1459 762.500 1445 750.500 1459Z" fill="#000" />
    <text x="762.300" y="1386" fontSize="24" fill="#333" textAnchor="middle">N</text>
  </svg>
);

/* ---------- tapered arrows ---------- */

const ARROWS: [number, number, number, number][] = [
  [334, 139, 159, 235], [343, 299, 212, 323], [312, 401, 186, 408.5], [313, 540.5, 181, 636], [346, 683, 179, 739],
  [341, 835.5, 191, 813.5], [795, 1060, 958, 867.5], [1721, 706, 1635.5, 895], [2059, 250.5, 2142.5, 231],
];

function arrowPoints([x0, y0, x1, y1]: [number, number, number, number]) {
  const len = Math.hypot(x1 - x0, y1 - y0);
  const ux = (x1 - x0) / len;
  const uy = (y1 - y0) / len;
  const at = (back: number, side: number) => `${x1 - ux * back - uy * side},${y1 - uy * back + ux * side}`;
  return [`${x0},${y0}`, at(20, 5), at(23, 11), `${x1},${y1}`, at(23, -11), at(20, -5)].join(' ');
}

/* ---------- data ---------- */

const NAMES: [string, number][] = [['dog', 45], ['person', 79], ['cat', 34], ['tv', 22], ['car', 34], ['meatballs', 109]];

const Tool = ({ gap, off, icon, label }: { gap: number; off?: boolean; icon: React.ReactNode; label: string }) => (
  <ToolItem $gap={gap} $off={off}>
    <IconSlot>{icon}</IconSlot>
    <ToolLabel><Mono>{label}</Mono></ToolLabel>
  </ToolItem>
);

export default function App() {
  return (
    <>
      <GlobalStyle />
      <Window lang="zh-CN">
        <TitleBar>
          <TagIcon />
          <TitleText><Fit w={135}>{'labelImg F:\\'}</Fit>目标检测图片<Fit w={9}>{'\\'}</Fit>万张图片集最终<Fit w={136}>{'\\000001.jpg'}</Fit></TitleText>
          <WindowButtons>
            <svg width="22" height="22" viewBox="0 0 22 22"><path d="M3 11H23" stroke="#999" strokeWidth="2" /></svg>
            <svg width="22" height="22" viewBox="0 0 22 22"><rect x="2" y="2" width="18" height="18" fill="none" stroke="#999" strokeWidth="2" /></svg>
            <svg width="22" height="22" viewBox="0 0 22 22"><path d="M1.500 1.500L20.500 20.500M20.500 1.500L1.500 20.500" stroke="#999" strokeWidth="1.800" /></svg>
          </WindowButtons>
        </TitleBar>
        <MenuBar><Fit w={39}>File</Fit><Fit w={41}>Edit</Fit><Fit w={54}>View</Fit><Fit w={54}>Help</Fit></MenuBar>

        <Body>
          <ToolColumn>
            <Tool gap={13} icon={<FolderIcon />} label="Open" />
            <Tool gap={13} icon={<FolderIcon />} label="Open Dir" />
            <Tool gap={13} icon={<FolderIcon />} label="Change Save Dir" />
            <Tool gap={18} icon={<BigArrow />} label="Next Image" />
            <Tool gap={13} icon={<BigArrow back />} label="Prev Image" />
            <Tool gap={16} icon={<VerifyIcon />} label="Verify Image" />
            <Tool gap={5} off icon={<SaveIcon />} label="Save" />
            <Tool gap={21} icon={<CodeIcon />} label="PascalVOC" />
            <Rule $gap={4} />
            <Tool gap={6} off icon={<CreateIcon />} label={'Create\\nRectBox'} />
            <Tool gap={14} off icon={<DuplicateIcon />} label={'Duplicate\\nRectBox'} />
            <Tool gap={18} off icon={<DeleteIcon />} label={'Delete\\nRectBox'} />
            <Rule $gap={12} />
            <Tool gap={8} icon={<Lens kind="in" />} label="Zoom In" />
            <ZoomField><Mono>186 %</Mono></ZoomField>
            <Tool gap={1} icon={<Lens kind="out" />} label="Zoom Out" />
            <Tool gap={13} icon={<Lens kind="window" />} label="Fit Window" />
            <Tool gap={13} icon={<Lens kind="width" />} label="Fit Widith" />
          </ToolColumn>

          <CanvasFrame>
            <Sheet><FloorPlan /></Sheet>
          </CanvasFrame>

          <Docks>
            <DockTitle><Mono>Box Labels</Mono></DockTitle>
            <EditButton><PageIcon /><Mono>Edit Label</Mono></EditButton>
            <CheckRow $top={11}><Box /><Mono>difficult</Mono></CheckRow>
            <CheckRow $top={28} $left={18}><Box /><Mono>Use default labtel</Mono><SmallField /></CheckRow>
            <LabelList />
            <DockTitle $gap={10}>
              <Mono>File List</Mono>
              <svg width="10" height="10" viewBox="0 0 10 10" fill="none" stroke="#000" strokeWidth="1.300"><path d="M3 3.500V1H9.500V6H7" /><rect x="1" y="4" width="6" height="5" /></svg>
            </DockTitle>
            <FileBox>
              <FileRows>
                {Array.from({ length: 12 }, (_, i) => (
                  <FileRow key={i}><Fit w={30}>{'F:\\'}</Fit>目标检测图片<Fit w={9}>{'\\'}</Fit>万张图片集最终</FileRow>
                ))}
              </FileRows>
              <VScroll>
                <ArrowCell><Chevron turn={0} /></ArrowCell>
                <VThumb $h={36} />
                <Spacer />
                <ArrowCell><Chevron turn={180} /></ArrowCell>
              </VScroll>
              <HScroll>
                <ArrowCell><Chevron turn={-90} /></ArrowCell>
                <HThumb />
                <Spacer />
                <ArrowCell><Chevron turn={90} /></ArrowCell>
              </HScroll>
            </FileBox>
          </Docks>
        </Body>

        <StatusBar>
          <StatusCell><Fit w={152}>X: 630; Y: 405</Fit></StatusCell>
          <Grip><i /><i /><i /><i /></Grip>
        </StatusBar>

        <Dialog>
          <DialogTitle>
            <TagIcon />
            <Fit w={98}>labelImg</Fit>
            <HelpMark>?</HelpMark>
            <svg width="22" height="22" viewBox="0 0 22 22"><path d="M1 1L21 21M21 1L1 21" stroke="#000" strokeWidth="1.800" /></svg>
          </DialogTitle>
          <DialogBody>
            <NameField><Mono>beikezhaofang</Mono><Caret /></NameField>
            <ButtonRow>
              <DialogButton $primary><CheckIcon /><NarrowLabel>OK</NarrowLabel></DialogButton>
              <DialogButton><UndoIcon /><Mono>Cancel</Mono></DialogButton>
            </ButtonRow>
            <NameList>
              <Names>{NAMES.map(([n, w]) => <NameRow key={n}><Fit w={w}>{n}</Fit></NameRow>)}</Names>
              <VScroll>
                <ArrowCell><Chevron turn={0} /></ArrowCell>
                <VThumb $h={40} />
                <Spacer />
                <ArrowCell><Chevron turn={180} /></ArrowCell>
              </VScroll>
            </NameList>
          </DialogBody>
        </Dialog>

        <Note $x={408} $y={100} $w={388}>打开需要标注的图片路径</Note>
        <Note $x={412} $y={266} $w={539}>修改保存<Fit w={182}>annotations</Fit>文件夹的路径</Note>
        <Note $x={382} $y={367} $w={950}>保存好后，点击<Fit w={179}>Next Image</Fit>进行下一张标注，以此循环以上步骤</Note>
        <Note $x={383} $y={503} $w={1331}>待完成以上步骤，点击<Fit w={72}>Save</Fit>进行保存<Fit w={168}>annotation</Fit>标注文件，文件名与图片名一样，不做修改</Note>
        <Note $x={409} $y={642} $w={808}>设置保存标注文件格式，这里选择默认（<Fit w={162}>PascalVOC</Fit>）</Note>
        <Note $x={413} $y={809} $w={324}>点击此处创建标注框</Note>
        <Note $x={420} $y={1066} $w={356}>选择要标注的位置区域</Note>
        <Note $x={1784} $y={638} $w={790}>待标注框选定好后会出现此窗口，命名标签建议是标<br />注目标拼音，点击<Fit w={38}>ok</Fit>，完成标签命名</Note>

        <Badge $x={370} $y={133}>1</Badge>
        <Badge $x={374} $y={299}>2</Badge>
        <Badge $x={344} $y={400}>8</Badge>
        <Badge $x={345} $y={536}>7</Badge>
        <Badge $x={371} $y={675}>3</Badge>
        <Badge $x={375} $y={842}>4</Badge>
        <Badge $x={382} $y={1099}>5</Badge>
        <Badge $x={1746} $y={671}>6</Badge>

        <RedText>这里不需要选择</RedText>
        <RedFrame $x={2149} $y={152} $w={416} $h={158} />
        <RedFrame $x={2141} $y={1015} $w={402} $h={462} />
        <RedFrame $x={1472} $y={917} $w={219} $h={57} />
        <ArrowLayer width="2562" height="1533" viewBox="0 0 2562 1533">
          {ARROWS.map((a, i) => <polygon key={i} points={arrowPoints(a)} fill={RED} />)}
        </ArrowLayer>
      </Window>
    </>
  );
}
